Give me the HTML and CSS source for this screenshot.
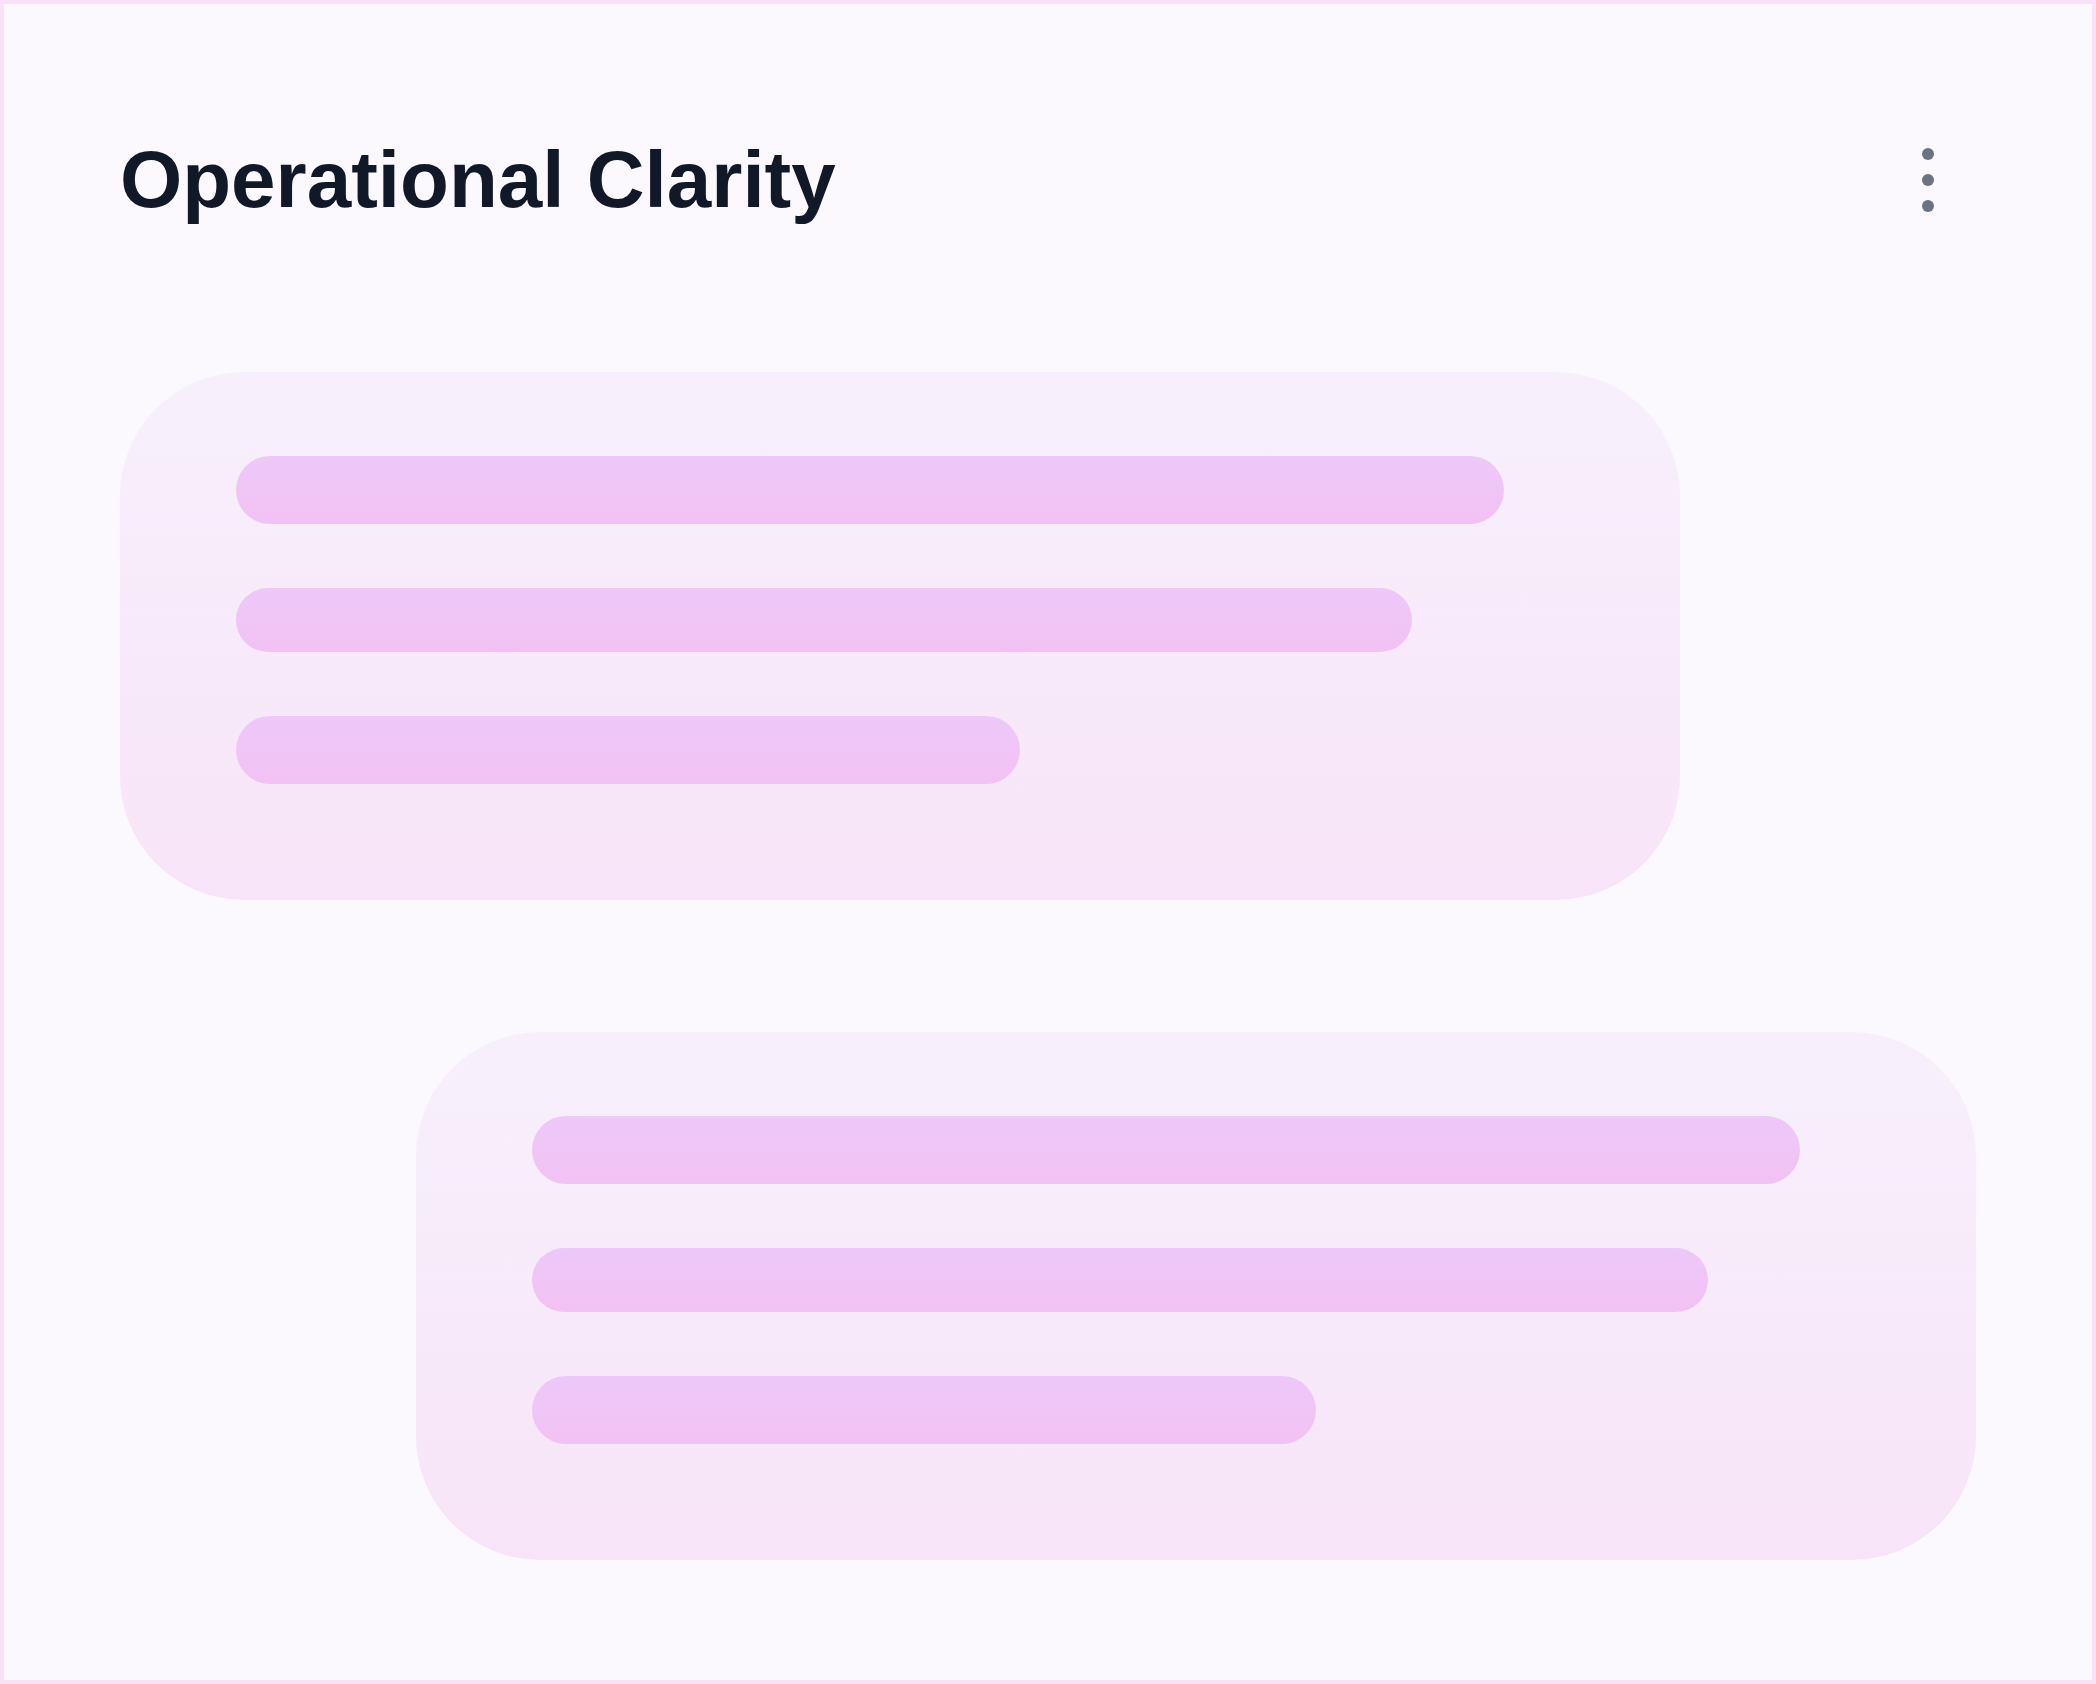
FILE: index.html
```html
<!DOCTYPE html>
<html lang="en">
<head>
<meta charset="utf-8">
<title>Operational Clarity</title>
<link rel="stylesheet" href="styles.css">
</head>
<body>
<div class="frame">
  <header class="header">
    <h1 class="title">Operational Clarity</h1>
    <button class="menu" aria-label="More options">
      <svg width="12" height="64" viewBox="0 0 12 64" aria-hidden="true">
        <circle cx="6" cy="6" r="6"/>
        <circle cx="6" cy="32" r="6"/>
        <circle cx="6" cy="58" r="6"/>
      </svg>
    </button>
  </header>
  <section class="cards">
    <div class="card card-first">
      <div class="bar bar-long"></div>
      <div class="bar bar-mid"></div>
      <div class="bar bar-short"></div>
    </div>
    <div class="card card-second">
      <div class="bar bar-long"></div>
      <div class="bar bar-mid"></div>
      <div class="bar bar-short"></div>
    </div>
  </section>
</div>
</body>
</html>
```

FILE: styles.css
```css
* { box-sizing: border-box; }

html, body {
  margin: 0;
  padding: 0;
}

body {
  font-family: "Liberation Sans", Arial, sans-serif;
  background: #fbf9fe;
}

.frame {
  width: 2096px;
  height: 1684px;
  border: 4px solid #f8e2f6;
  background: #fbf9fe;
  display: flex;
  flex-direction: column;
}

.header {
  display: flex;
  justify-content: space-between;
  align-items: center;
  padding: 136px 158px 0 116px;
}

.title {
  margin: 0;
  font-size: 80px;
  line-height: 80px;
  font-weight: 700;
  color: #111827;
  letter-spacing: 0;
}

.menu {
  border: 0;
  padding: 0;
  margin: 0;
  background: none;
  display: flex;
  fill: #6b7280;
}

.menu svg { display: block; }

.cards {
  display: flex;
  flex-direction: column;
  gap: 132px;
  padding-top: 152px;
}

.card {
  width: 1560px;
  height: 528px;
  border-radius: 124px;
  background: linear-gradient(180deg, #f7f0fc 0%, #f8e4f8 100%);
  padding: 84px 0 0 116px;
  display: flex;
  flex-direction: column;
  align-items: flex-start;
}

.card-first { margin-left: 116px; }
.card-second { margin-left: 412px; }

.bar {
  height: 68px;
  border-radius: 34px;
  background: linear-gradient(180deg, #edc8f9 0%, #f3c1f3 100%);
}

.bar-long { width: 1268px; }
.bar-mid { width: 1176px; height: 64px; margin-top: 64px; border-radius: 32px; }
.bar-short { width: 784px; margin-top: 64px; }
```
